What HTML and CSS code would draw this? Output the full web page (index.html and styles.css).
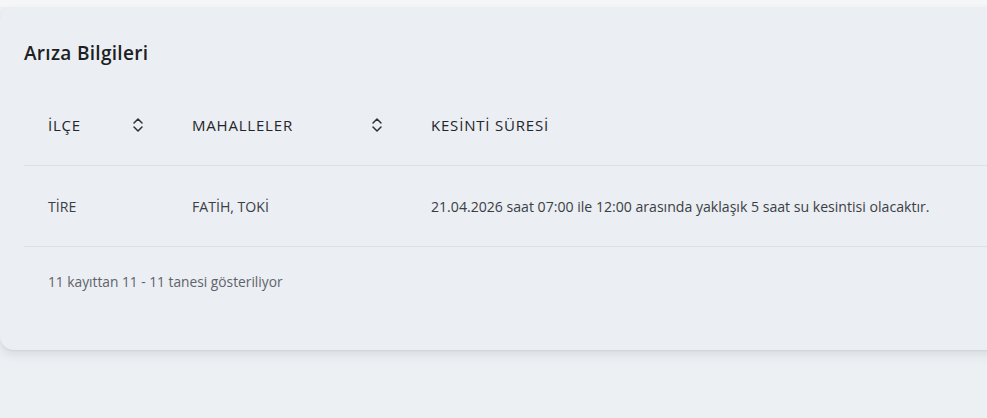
FILE: index.html
```html
<!DOCTYPE html>
<html lang="tr">
<head>
<meta charset="utf-8">
<title>Arıza Bilgileri</title>
<link rel="stylesheet" href="styles.css">
</head>
<body>
<div class="page">
  <section class="card">
    <h2 class="title">Arıza Bilgileri</h2>
    <table class="table">
      <thead>
        <tr>
          <th class="c1"><div class="th"><span>İLÇE</span><svg class="sort" viewBox="0 0 12 16" width="12" height="16"><path d="M2 6 L6 2 L10 6 M2 10 L6 14 L10 10" fill="none" stroke="#2b2f36" stroke-width="1.5" stroke-linecap="round" stroke-linejoin="round"/></svg></div></th>
          <th class="c2"><div class="th"><span>MAHALLELER</span><svg class="sort" viewBox="0 0 12 16" width="12" height="16"><path d="M2 6 L6 2 L10 6 M2 10 L6 14 L10 10" fill="none" stroke="#2b2f36" stroke-width="1.5" stroke-linecap="round" stroke-linejoin="round"/></svg></div></th>
          <th class="c3"><div class="th"><span>KESİNTİ SÜRESİ</span></div></th>
        </tr>
      </thead>
      <tbody>
        <tr>
          <td>TİRE</td>
          <td>FATİH, TOKİ</td>
          <td>21.04.2026 saat 07:00 ile 12:00 arasında yaklaşık 5 saat su kesintisi olacaktır.</td>
        </tr>
      </tbody>
    </table>
    <div class="info">11 kayıttan 11 - 11 tanesi gösteriliyor</div>
  </section>
</div>
</body>
</html>
```
FILE: styles.css
```css
html, body {
  margin: 0;
  padding: 0;
}
body {
  background: #edf0f3;
  font-family: "Open Sans", Lato, sans-serif;
  color: #2b2f36;
}
.page {
  padding-top: 7px;
  background: linear-gradient(#f5f6f8 0, #f5f6f8 7px, #edf0f3 7px);
  height: 418px;
  box-sizing: border-box;
  overflow: hidden;
}
.card {
  width: 1010px;
  height: 343px;
  box-sizing: border-box;
  background: #ebeef2;
  border-radius: 14px 0 0 14px;
  box-shadow: 0 5px 10px rgba(40, 50, 70, 0.10), 0 1px 2px rgba(40, 50, 70, 0.06);
  padding: 34px 0 0 24px;
}
.title {
  margin: 0;
  font-size: 19px;
  font-weight: 600;
  line-height: 24px;
  letter-spacing: 0.3px;
  color: #1c1f24;
}
.table {
  border-collapse: collapse;
  width: 986px;
  margin-top: 20px;
}
.table th, .table td {
  text-align: left;
  padding: 0 24px;
  border-bottom: 1px solid #dde1e6;
}
.table th {
  height: 80px;
  font-size: 15px;
  font-weight: 500;
  letter-spacing: 0.8px;
  color: #22252b;
}
.th {
  display: flex;
  align-items: center;
  justify-content: space-between;
}
.c1 { width: 96px; }
.c2 { width: 191px; }
.table td {
  height: 80px;
  font-size: 14.1px;
  color: #3a3e45;
}
.info {
  margin-top: 26px;
  padding-left: 24px;
  font-size: 13.75px;
  color: #5e636b;
  line-height: 18px;
}
```
